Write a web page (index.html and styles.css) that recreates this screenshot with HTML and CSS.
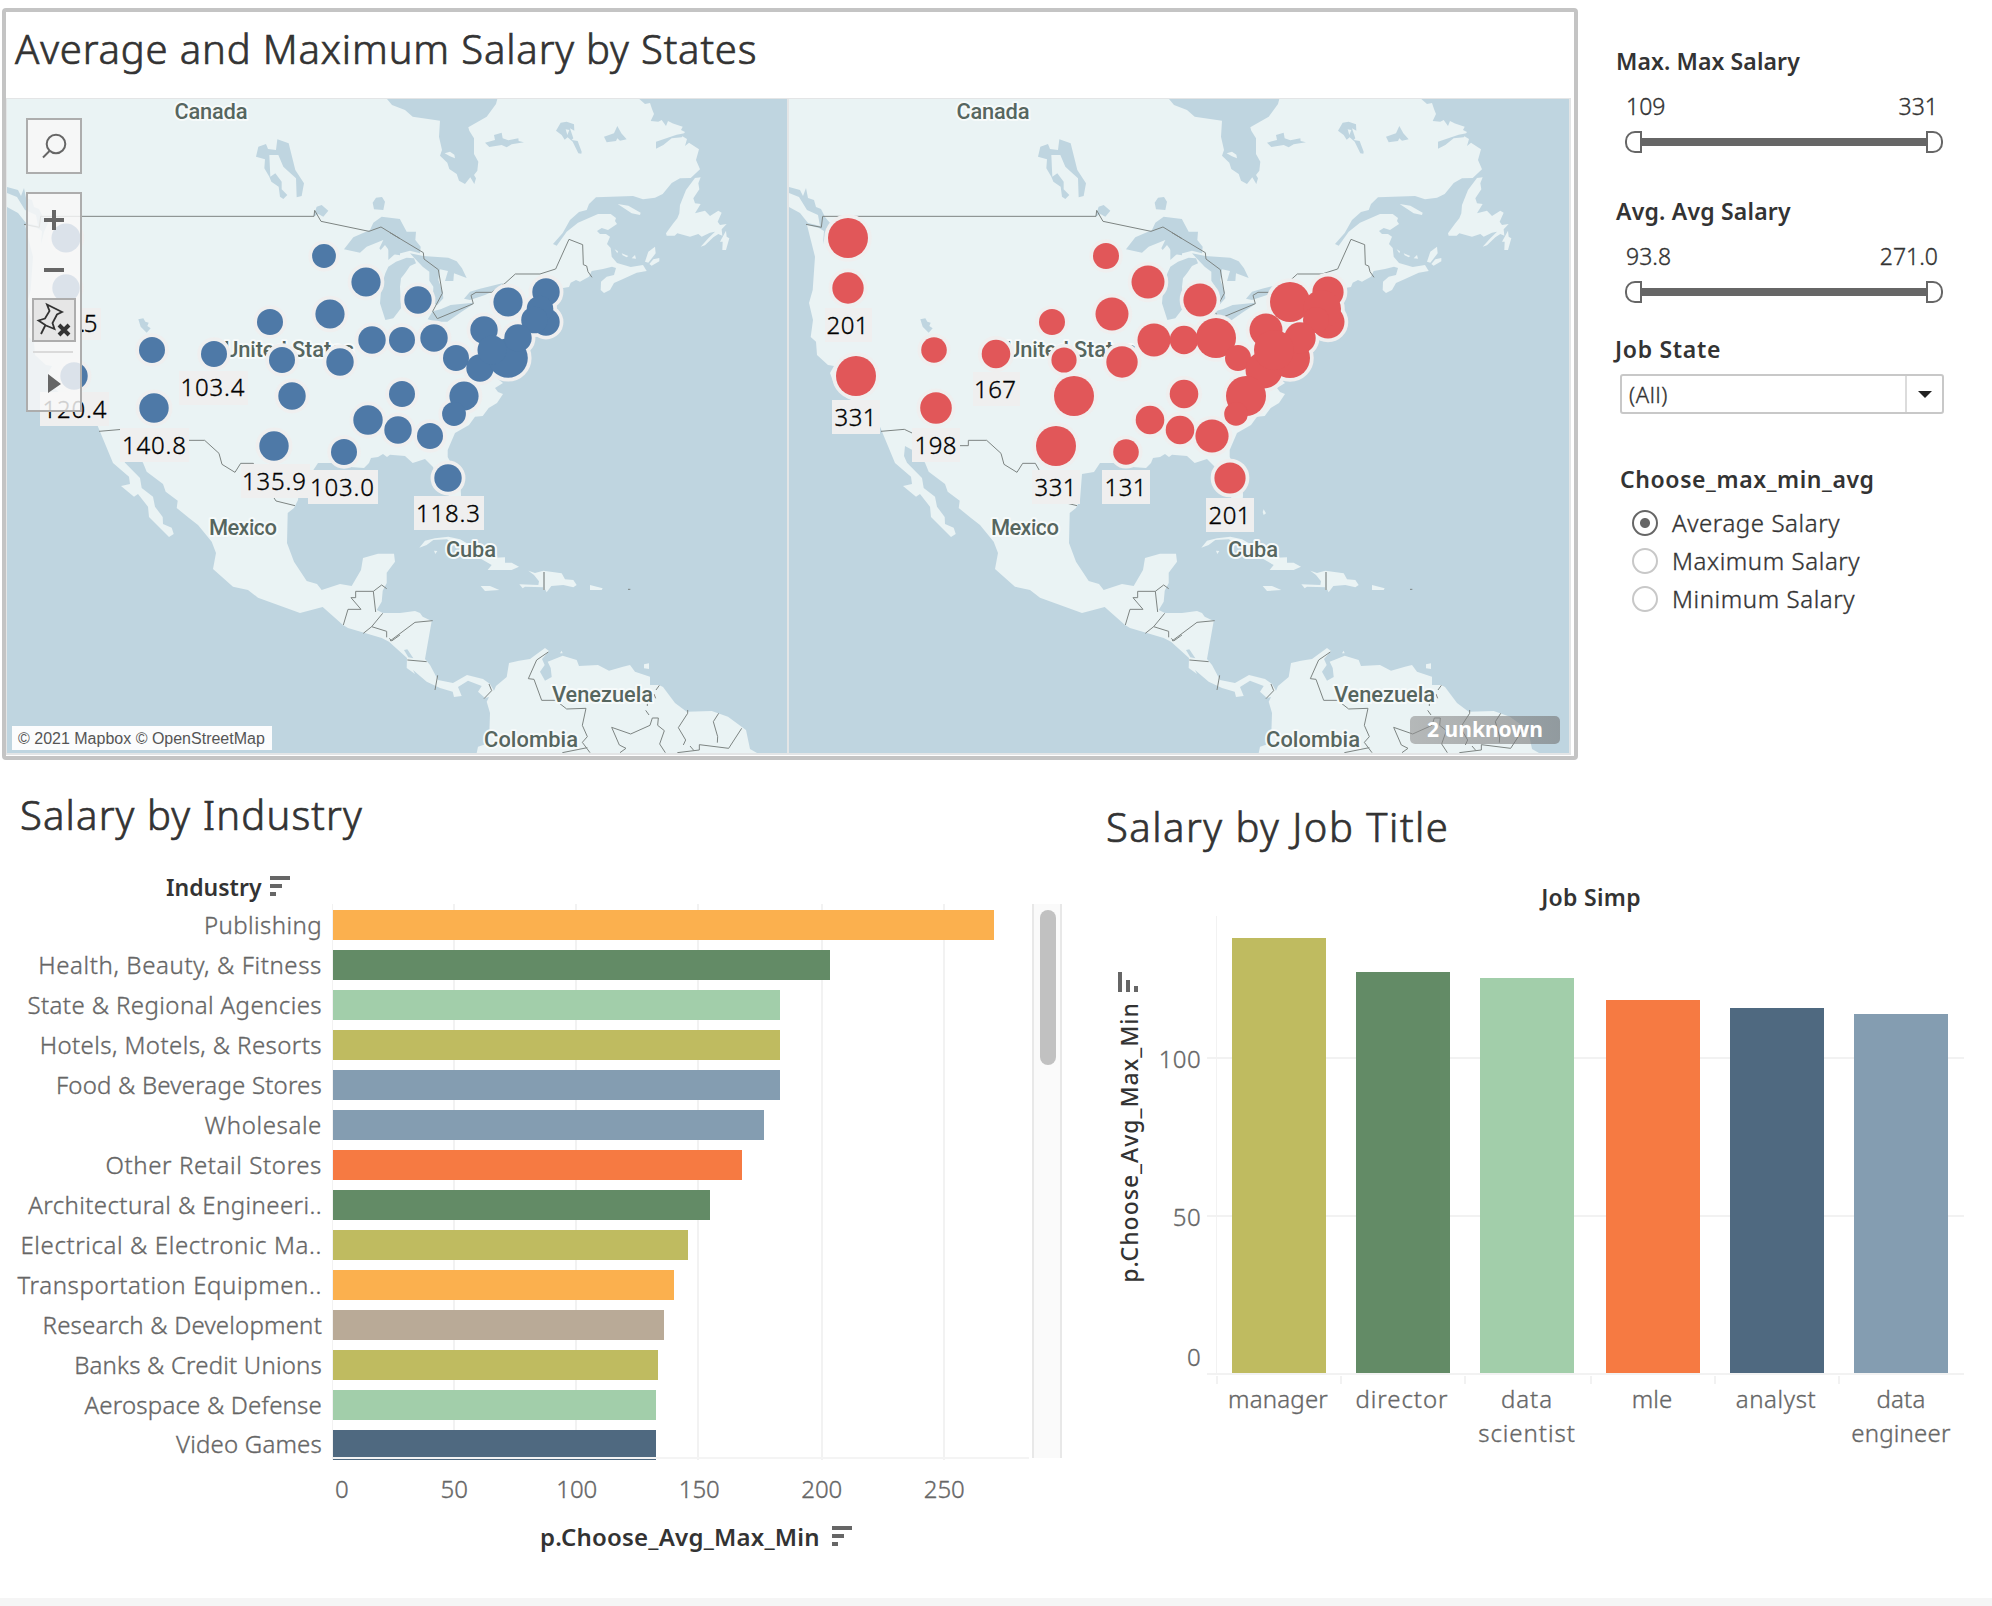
FILE: index.html
```html
<!DOCTYPE html>
<html lang="en">
<head>
<meta charset="utf-8">
<title>Salary dashboard</title>
<link rel="stylesheet" href="styles.css">
</head>
<body>
<svg class="defs" width="0" height="0" aria-hidden="true">
  <defs>
    <g id="basemap">
      <rect class="water" x="0" y="90" width="800" height="670"/>
      <path class="land" d="M7 99H387L392 105 405 110 412.700 116.700 440 120.700 439 136.700 442 150 440 155.700 447.300 162.700 449.300 169 456.700 174 459 180.700 465 184 470.300 177.300 474.300 184 476 178.300 474 175 477.300 170.700 478.300 161.700 474 154V138.300L469.300 130.700 468.300 127.300 486.700 116.700 496 104 497.300 99H639.300L645 104 650 103 652 109 654 114 650.700 121 658.300 121.700 661.700 120 666 126 668 121 673 123.500 682.700 126.700 681 130 685 132 682 136 687 139 685 146 689 142.700 699 149.300 696 160 700 169.300 690.700 178 680 178.300 671.700 183 662.700 194 655 197.700 643 199.300 633 196 596 197.300 589 204 586.700 210 579 212 570 220 562.700 233 553 244 556.700 245.700 566.700 231.700 578 222.700 598 214H610.700L616 218 615 221 617 224 608 230 601.700 228 597 231 600 234H606L610 236.700 607 244 610.700 248 611.700 256.700 617 263 630.700 267 643 265 646.700 271 636.700 272.700 623 279 614 283 610 290 604 293 600.700 290 601 281.700 606.700 276.700 614 275 616 268 612 266.700 603 269 591.700 271 589 276.700 583 280 580 281.700 576 280 570.700 282.700 569 287 563 288 561 295 557 302 552 314 554 325 546 332 533 337 532 346 524 356 519 370 512 379H498L503 383 495 388 498 392 503 394 497 403 488.700 408 482.700 416 475 416.700 469 425 455 433 447.700 450V457L452 465 460 478 461 495 460 512 454 514 447 490 438 480 433 467 425 459 412.700 463 405 456 390 454.700 387 457 383 454 378 457 371 458 369 463 364 468 350 467 333 463 318 463 312 472 300 474 298 500 294 508 287.700 513 287 543 294 561.700 306.700 581 317 584 321.700 590 340 584 351.700 586 361 570 363 558 378 553.700H394L395 561.700 386.700 572.700V583L382.700 590.700 381.700 601.700 376.700 610 383 613H400L415 611 420 613 422.700 616.700 431.700 621 425 659 430 665 438 680 453 683 467 675 483 679 490 684 494 690.700 496 686 506.700 677 509 663 519 660.700 530 659 545 648 549 651 542 659 544.700 665 540 671.700 545 680.700 551.700 677 550.700 668 547.700 661.700 562.700 655.700 576.700 660 579 666 598 665 609 670.700 623 666.700 630 665 635 671.700 650 676.700V685H659L663 687 675 703 686.700 711.700 711.700 711 728 716.700 746 730 750 749 757 753H476.700L478 746.700 489 743 490 713 486.700 701.700 489 697 485 698 478 691.700 481.700 686 468 680.700 458 687 461.700 696 454 697 452.700 691.700 440 688 426.700 681.700 413 670 415 674 406.700 668 407 658 389 641.700 381.700 638 348 628 343 625 322.700 607 300 613 258 597.700 248 590 233 586.700 213 569 216 553 211.700 541.700 198 525 189 518 176.700 508 177.700 500.700 165.700 491.700 163 484 146.700 471.700 143 462.700 134 452 123 446 122 456 125 462.700 140 478 141.700 488 153 496.700 155 506.700 162.700 517 163 524 171.700 527.700 173.700 534 169 537 149 517 148 506.700 138 494 134 496.700 121 486 130 484 129 476.700 113 463 98 426.700 92 410 64.700 398 53 386.700 48 373 52 366 46 365 35 355 34 341.700 28.700 337 31 320 27 303 30.700 290 33 256.700 25 225 37 228 42 231 41 244 44 232 48 223 43 217 39 209 34 207 32 200 26 198 24 188 21 196 18 190 7 187Z"/>
      <g class="land">
        <path d="M7 193 17 197 25 210 36 215 38 226 26 223 18 213 7 207Z"/>
        <g transform="translate(390 90) scale(.33333)">
          <path d="M164 190 180 185 193 194 195 205 180 199ZM683 342 715 347 752 368 750 375 725 370ZM932 262 915 264 888 300 870 345 868 370 862 385 850 400 828 430 830 437 854 437 862 430 900 440 925 432 935 440 960 428 975 425 955 445 932 470 945 466 970 442 985 432 997 437 995 418 1010 402 990 405 983 395 995 368 985 362 960 378 945 362 915 370 932 342 915 340 910 325 928 298 925 280ZM990 455 1008 422 1010 440 1018 445 1008 480 997 480 998 455ZM765 515 775 485 795 470 797 490 775 518ZM778 522 790 508 808 504 808 514 785 527ZM674 478 684 484 682 490ZM695 490 715 498 710 502 698 496ZM725 505 735 495 738 506Z"/>
        </g>
        <g transform="translate(390 450) scale(.33333)">
          <path d="M88 293 105 272 135 265 175 260 210 268 240 285 290 310 312 323 345 322 345 338 365 338 387 350 365 360H293L305 345 270 325 210 285 170 268 130 270 110 285ZM132 302 142 303 136 312ZM415 362 435 369 460 362 515 370 525 388 550 390 560 405 550 412 520 405 484 408 470 427 462 412 405 410 398 415 388 403 445 405 447 394 432 375ZM600 405 638 415 635 420H600ZM272 408 300 408 328 420 285 423ZM762 643 777 640V657L762 655ZM510 610 515 602 518 610ZM275 178 282 190 275 195 272 186Z"/>
        </g>
      </g>
      <g class="water">
        <path transform="scale(.33333)" d="M775 440 798 432 804 447 828 450 832 418 866 430 886 510 912 550 905 588 890 592 888 535 868 517 850 500 835 465 808 465 811 530 826 520 845 545 845 568 862 585 850 597 840 590 836 560 814 545 808 530 793 505 795 478 768 470ZM940 650 950 620 965 615 985 632 970 650 955 642ZM1118 608 1128 593 1146 591 1155 605 1150 630 1122 628ZM1032 748 1060 712 1110 690 1120 668 1145 650 1200 657V766L1175 762 1155 735 1142 750 1138 745 1150 720 1100 740 1080 758ZM415 958 430 955 436 965 446 968 442 978 452 985 440 998 422 980Z"/>
        <g transform="translate(390 90) scale(.33333)">
          <path d="M-5 387 30 388 50 425 78 425 76 450 92 470 90 490 60 482 32 490 15 492-5 510ZM-26 590-14 550-5 530 18 515 50 503 72 505 78 520 60 528 45 550 33 565 30 590 33 655 10 685-14 690-30 640ZM60 490 100 498 175 503 200 514 216 535 230 564 192 550 190 573 165 573 174 543 150 538 145 570 158 605 160 625 142 645 128 640 130 590 118 572V545L98 530ZM113 688 128 664 152 658 182 645 250 638 246 645 215 665 172 695 140 695ZM222 626 240 605 270 596 340 579 318 600 285 615 240 630ZM285 158 315 150 312 135 335 128 338 145 355 151 385 145 386 153 402 157 365 163 350 172 335 165 298 171ZM498 122 512 98 530 95 552 103 553 122 540 115 550 145 545 150 563 153 575 185 574 191 565 190 548 155 533 142 524 149 515 135ZM527 118 532 135 538 120ZM642 140 672 130 682 108 694 130 710 148 690 152 682 145 678 153 650 157ZM798 155 820 148 860 134 884 130 875 142 845 145 820 165 798 176Z"/>
        </g>
        <path transform="translate(390 450) scale(.33333)" d="M42 600 52 598 70 625 55 622Z"/>
      </g>
      <g class="borders">
        <path transform="scale(.33333)" d="M72 673 118 682 122 649H942L944 631 963 664 1107 694 1143 681 1200 716"/>
        <path transform="translate(390 90) scale(.33333)" d="M0 428 100 488 102 507 145 539 157 610 128 664 142 686 250 641 243 616 258 607H305L345 580 376 552 450 552 497 537 537 448 578 464 580 524 590 528 594 545 606 562"/>
        <path transform="translate(-2 90) scale(.33333)" d="M303 1024 373 1018 430 1045 480 1067H565V1051H620L663 1090 672 1123 711 1147 728 1120H766L800 1180 834 1233 891 1247"/>
        <path transform="translate(0 380) scale(.33333)" d="M1030 735 1044 688H1083L1053 653H1067V634H1120L1145 615 1160 626M1120 634 1127 696M1148 700 1115 740 1090 760M1115 740 1160 754V772M1168 775 1175 783 1200 765"/>
        <path transform="translate(390 450) scale(.33333)" d="M0 573 75 517 128 512M52 630 110 635M143 676 135 720M297 702 305 722 282 746M475 606 440 630 415 686 432 688 455 751H497L530 777 588 775 577 826 592 860 577 877 600 908M517 908 592 893M808 706 798 720M792 732 797 745M772 758V768M767 781 777 795M690 908 708 895 688 885 665 832 722 852 780 826 787 804H805L803 826 823 842 809 882 826 908M893 780V790L865 833 887 870 880 885M900 888 912 902M862 908 928 900V884L1016 895 1055 835M986 790 970 815 983 860 982 878M714 418H721"/>
        <path class="heavy" transform="translate(390 450) scale(.33333)" d="M462 366V420"/>
      </g>
      <g class="country">
        <text x="174.500" y="118.500" textLength="73">Canada</text>
        <text x="224" y="356.500" textLength="130">United States</text>
        <text x="209" y="534.500" textLength="68">Mexico</text>
        <text x="446" y="556.500" textLength="50">Cuba</text>
        <text x="552" y="701.500" textLength="101">Venezuela</text>
        <text x="484" y="746.500" textLength="94">Colombia</text>
      </g>
    </g>
    <g id="avg-marks">
      <circle cx="66" cy="238" r="14.500"/><circle cx="66" cy="288" r="13.700"/><circle cx="74" cy="376" r="13.700"/>
      <circle cx="324" cy="256" r="11.900"/><circle cx="366" cy="282" r="14.600"/><circle cx="330" cy="314" r="14.600"/>
      <circle cx="270" cy="322" r="13"/><circle cx="152" cy="350" r="13"/><circle cx="214" cy="354" r="13"/>
      <circle cx="282" cy="360" r="13"/><circle cx="340" cy="362" r="13.700"/><circle cx="372" cy="340" r="13.700"/>
      <circle cx="402" cy="340" r="13"/><circle cx="154" cy="408" r="14.700"/><circle cx="292" cy="396" r="13.700"/>
      <circle cx="274" cy="446" r="14.700"/><circle cx="344" cy="452" r="13"/><circle cx="368" cy="420" r="14.700"/>
      <circle cx="402" cy="394" r="13"/><circle cx="398" cy="430" r="13.700"/><circle cx="418" cy="300" r="13.700"/>
      <circle cx="434" cy="338" r="13.700"/><circle cx="456" cy="358" r="13"/><circle cx="480" cy="368" r="13.700"/>
      <circle cx="508" cy="358" r="19.800"/><circle cx="508" cy="302" r="14.600"/><circle cx="546" cy="292" r="13.700"/>
      <circle cx="546" cy="322" r="13.700"/><circle cx="540" cy="309" r="13.300"/><circle cx="534.500" cy="320" r="13.300"/>
      <circle cx="484" cy="330" r="13.700"/><circle cx="518" cy="338" r="13.700"/><circle cx="492" cy="350" r="14.500"/>
      <circle cx="464" cy="396" r="14.600"/><circle cx="454" cy="414" r="11.900"/><circle cx="430" cy="436" r="13"/>
      <circle cx="448" cy="478" r="13.700"/>
    </g>
    <g id="max-marks">
      <circle cx="66" cy="238" r="20"/><circle cx="66" cy="288" r="15.700"/><circle cx="74" cy="376" r="20"/>
      <circle cx="324" cy="256" r="13"/><circle cx="366" cy="282" r="16.500"/><circle cx="330" cy="314" r="16.500"/>
      <circle cx="270" cy="322" r="13"/><circle cx="152" cy="350" r="12.800"/><circle cx="214" cy="354" r="14.300"/>
      <circle cx="282" cy="360" r="12.600"/><circle cx="340" cy="362" r="15.700"/><circle cx="372" cy="340" r="16.500"/>
      <circle cx="402" cy="340" r="14.200"/><circle cx="154" cy="408" r="15.800"/><circle cx="292" cy="396" r="20"/>
      <circle cx="274" cy="446" r="20"/><circle cx="344" cy="452" r="12.800"/><circle cx="368" cy="420" r="14.300"/>
      <circle cx="402" cy="394" r="14.300"/><circle cx="398" cy="430" r="14.300"/><circle cx="418" cy="300" r="16.600"/>
      <circle cx="434" cy="338" r="20"/><circle cx="456" cy="358" r="13"/><circle cx="482" cy="370" r="18.500"/>
      <circle cx="508" cy="358" r="20"/><circle cx="508" cy="302" r="20"/><circle cx="546" cy="292" r="15.600"/>
      <circle cx="546" cy="322" r="16.500"/><circle cx="540" cy="309" r="19"/><circle cx="534" cy="320" r="13"/>
      <circle cx="484" cy="330" r="16.500"/><circle cx="518" cy="338" r="15.700"/><circle cx="492" cy="350" r="20"/>
      <circle cx="464" cy="396" r="20"/><circle cx="454" cy="414" r="11.800"/><circle cx="430" cy="436" r="16.600"/>
      <circle cx="448" cy="478" r="15.600"/>
    </g>
  </defs>
</svg>

<main class="dashboard">
  <div class="top-row">
    <section class="map-card">
      <h1 class="title map-title">Average and Maximum Salary by States</h1>
      <div class="panes">
        <div class="pane">
          <svg class="map" viewBox="7 99 780 654">
            <use href="#basemap"/>
            <use href="#avg-marks" class="halo"/>
            <g class="label-box">
              <rect x="31" y="308" width="70" height="32"/><rect x="40" y="392" width="69" height="34"/>
              <rect x="179" y="371" width="69" height="34"/><rect x="120" y="428" width="69" height="34"/>
              <rect x="241" y="464" width="69" height="34"/><rect x="308" y="470" width="70" height="34"/>
              <rect x="414" y="496" width="70" height="34"/>
            </g>
            <use href="#avg-marks" class="avg"/>
            <g class="mark-label">
              <text x="88.500" y="332" textLength="18">.5</text>
              <text x="74.500" y="418" textLength="64">120.4</text>
              <text x="212.500" y="396" textLength="64">103.4</text>
              <text x="154" y="454" textLength="64">140.8</text>
              <text x="274" y="490" textLength="64">135.9</text>
              <text x="342" y="496" textLength="64">103.0</text>
              <text x="448" y="522" textLength="64">118.3</text>
            </g>
          </svg>
          <div class="controls">
            <div class="search">
              <svg viewBox="0 0 52 52"><circle cx="28" cy="24" r="9.300"/><path d="M21.500 31 15 37.500"/></svg>
            </div>
            <div class="toolbar">
              <svg viewBox="26 192 56 220">
                <path class="solid" d="M44 218H52V210H56V218H64V222H56V230H52V222H44ZM44 268H64V272H44ZM48 374 61 384 48 393Z"/>
                <rect class="pin-box" x="33" y="299" width="42" height="42"/>
                <path class="pin" d="M47 304.500 62 312 57 314.500 52.500 323 54.500 329 46 325.500 38.500 320.500 45 318.500 49.500 311ZM45.500 325 41 334"/>
                <path class="cross" d="M59 325 69 335M69 325 59 335"/>
                <path class="rule" d="M33 352H73"/>
              </svg>
            </div>
          </div>
          <div class="attribution">© 2021 Mapbox © OpenStreetMap</div>
        </div>
        <div class="pane">
          <svg class="map" viewBox="7 99 780 654">
            <use href="#basemap"/>
            <use href="#max-marks" class="halo"/>
            <g class="label-box">
              <rect x="43" y="308" width="47" height="34"/><rect x="50" y="400" width="48" height="34"/>
              <rect x="130" y="428" width="48" height="34"/><rect x="191" y="372" width="47" height="34"/>
              <rect x="250" y="470" width="48" height="34"/><rect x="320" y="470" width="48" height="34"/>
              <rect x="424" y="498" width="48" height="34"/>
            </g>
            <use href="#max-marks" class="max"/>
            <g class="mark-label">
              <text x="65.500" y="334" textLength="42">201</text>
              <text x="73.500" y="426" textLength="42">331</text>
              <text x="153.500" y="454" textLength="42">198</text>
              <text x="213" y="398" textLength="42">167</text>
              <text x="273.500" y="496" textLength="42">331</text>
              <text x="343.500" y="496" textLength="42">131</text>
              <text x="447.500" y="524" textLength="42">201</text>
            </g>
          </svg>
          <div class="unknown">2 unknown</div>
        </div>
      </div>
    </section>

    <aside class="filters">
      <h2 class="filter-title">Max. Max Salary</h2>
      <div class="range">
        <div class="range-values"><span>109</span><span>331</span></div>
        <div class="slider"><i class="knob left"></i><i class="track"></i><i class="knob right"></i></div>
      </div>
      <h2 class="filter-title t-avg">Avg. Avg Salary</h2>
      <div class="range">
        <div class="range-values"><span>93.8</span><span>271.0</span></div>
        <div class="slider"><i class="knob left"></i><i class="track"></i><i class="knob right"></i></div>
      </div>
      <h2 class="filter-title t-state">Job State</h2>
      <div class="select"><span>(All)</span><b><svg viewBox="0 0 14 7"><path d="M0 0H14L7 7Z"/></svg></b></div>
      <h2 class="filter-title t-choose">Choose_max_min_avg</h2>
      <div class="radios">
        <label><i class="radio on"></i><span>Average Salary</span></label>
        <label><i class="radio"></i><span>Maximum Salary</span></label>
        <label><i class="radio"></i><span>Minimum Salary</span></label>
      </div>
    </aside>
  </div>

  <div class="bottom-row">
    <section class="industry">
      <h1 class="title industry-title">Salary by Industry</h1>
      <div class="industry-head"><span class="head-text">Industry</span>
        <svg class="sort" viewBox="0 0 20 20"><path d="M0 0H20V4H0ZM0 8H12V12H0ZM0 16H6V20H0Z"/></svg></div>
      <div class="industry-body">
        <div class="plot">
          <i class="grid-x first" style="left:332px"></i><i class="grid-x" style="left:453px"></i><i class="grid-x" style="left:575px"></i><i class="grid-x" style="left:697px"></i><i class="grid-x" style="left:821px"></i><i class="grid-x" style="left:943px"></i>
          <div class="row"><span class="wide">Publishing</span><i class="bar amber" style="width:661px"></i></div>
          <div class="row"><span class="wider">Health, Beauty, &amp; Fitness</span><i class="bar green" style="width:497px"></i></div>
          <div class="row"><span class="wide">State &amp; Regional Agencies</span><i class="bar mint" style="width:447px"></i></div>
          <div class="row"><span class="wide">Hotels, Motels, &amp; Resorts</span><i class="bar olive" style="width:447px"></i></div>
          <div class="row"><span class="snug">Food &amp; Beverage Stores</span><i class="bar steel" style="width:447px"></i></div>
          <div class="row"><span class="wider">Wholesale</span><i class="bar steel" style="width:431px"></i></div>
          <div class="row"><span class="wider">Other Retail Stores</span><i class="bar orange" style="width:409px"></i></div>
          <div class="row"><span class="wide">Architectural &amp; Engineeri..</span><i class="bar green" style="width:377px"></i></div>
          <div class="row"><span class="wider">Electrical &amp; Electronic Ma..</span><i class="bar olive" style="width:355px"></i></div>
          <div class="row"><span class="wider">Transportation Equipmen..</span><i class="bar amber" style="width:341px"></i></div>
          <div class="row"><span class="snug">Research &amp; Development</span><i class="bar taupe" style="width:331px"></i></div>
          <div class="row"><span class="snug">Banks &amp; Credit Unions</span><i class="bar olive" style="width:325px"></i></div>
          <div class="row"><span class="snug">Aerospace &amp; Defense</span><i class="bar mint" style="width:323px"></i></div>
          <div class="row"><span class="snug last">Video Games</span><i class="bar navy" style="width:323px"></i></div>
          <i class="axis-line"></i>
        </div>
        <div class="scroll"><i></i></div>
      </div>
      <div class="axis-x"><span>0</span><span>50</span><span>100</span><span>150</span><span>200</span><span>250</span></div>
      <div class="axis-title"><span>p.Choose_Avg_Max_Min</span>
        <svg class="sort" viewBox="0 0 20 20"><path d="M0 0H20V4H0ZM0 8H12V12H0ZM0 16H6V20H0Z"/></svg></div>
    </section>

    <section class="jobs">
      <h1 class="title job-title">Salary by Job Title</h1>
      <div class="job-head">Job Simp</div>
      <div class="job-body">
        <div class="y-title">
          <svg class="sort-v" viewBox="0 0 20 20"><path d="M0 0H4V20H0ZM8 8H12V20H8ZM16 14H20V20H16Z"/></svg>
          <span>p.Choose_Avg_Max_Min</span>
        </div>
        <div class="y-axis"><span class="y100">100</span><span class="y50">50</span><span class="y0">0</span></div>
        <div class="columns">
          <i class="grid-y" style="top:141px"></i><i class="grid-y" style="top:299px"></i><i class="grid-y" style="top:457px"></i>
          <div class="cell"><i class="olive" style="height:435px"></i></div>
          <div class="cell"><i class="green" style="height:401px"></i></div>
          <div class="cell"><i class="mint" style="height:395px"></i></div>
          <div class="cell"><i class="orange" style="height:373px"></i></div>
          <div class="cell"><i class="navy" style="height:365px"></i></div>
          <div class="cell"><i class="steel" style="height:359px"></i></div>
        </div>
      </div>
      <div class="job-labels"><span class="snug">manager</span><span class="widest">director</span><span class="widest">data<br>scientist</span><span>mle</span><span class="wider">analyst</span><span class="snug">data<br>engineer</span></div>
    </section>
  </div>
  <footer class="strip"></footer>
</main>
</body>
</html>
```
FILE: styles.css
```css
* { box-sizing: border-box; }
body { margin: 0; background: #fff; font-family: "Noto Sans", "Open Sans", sans-serif; color: #333; }
i { display: block; font-style: normal; }
.defs { position: absolute; }
.dashboard { width: 1992px; height: 1606px; display: flex; flex-direction: column; overflow: hidden; }
.title { margin: 0; font-size: 40px; font-weight: 300; line-height: 58px; white-space: nowrap; color: #333; -webkit-text-stroke: .7px #333; }

/* map card */
.top-row { display: flex; height: 760px; padding: 8px 0 0 2px; }
.map-card { width: 1576px; height: 752px; border: 4px solid #c4c4c4; border-radius: 4px; flex: none; }
.map-title { height: 86px; line-height: 73px; padding-left: 9px; letter-spacing: .85px; }
.panes { display: flex; gap: 2px; width: 1565px; height: 657px; padding: 1px 2px 2px 1px; background: #e3e5e6; }
.pane { position: relative; width: 780px; height: 654px; flex: none; }
.map { display: block; width: 780px; height: 654px; }
.water { fill: #bfd5e0; }
.land { fill: #eaf3f4; }
.borders { fill: none; stroke: #7c8482; stroke-width: 3; }
.heavy { stroke: #a9b1b1; stroke-width: 6; }
.country { font: 500 22px Roboto, sans-serif; fill: #56665f; stroke: #f6fafa; stroke-width: 4px; stroke-linejoin: round; paint-order: stroke; }
.halo { fill: #efefef; stroke: #efefef; stroke-width: 7.500px; }
.avg { fill: #4e79a7; }
.max { fill: #e15759; }
.label-box { fill: #efefef; }
.mark-label { font-size: 24px; fill: #000; stroke: #000; stroke-width: .35px; text-anchor: middle; font-weight: 300; }
.controls { position: absolute; left: 19px; top: 19px; display: flex; flex-direction: column; gap: 18px; }
.search, .toolbar { width: 56px; background: rgba(248, 248, 248, .83); border: 2px solid #adadad; }
.search { height: 56px; }
.toolbar { height: 220px; }
.search svg { display: block; width: 52px; height: 52px; fill: none; stroke: #666; stroke-width: 2; }
.toolbar svg { display: block; width: 56px; height: 220px; margin: -2px; }
.solid { fill: #666; }
.pin-box { fill: #e6e6e6; stroke: #adadad; stroke-width: 2; }
.pin { fill: none; stroke: #333; stroke-width: 1.800; }
.cross { stroke: #333; stroke-width: 4; }
.rule { stroke: #dadada; stroke-width: 2; }
.attribution { position: absolute; left: 5px; top: 627px; width: 260px; height: 24px; padding-left: 6px; background: rgba(255, 255, 255, .93); font: 16px/25px "Liberation Sans", sans-serif; color: #555; white-space: nowrap; }
.unknown { position: absolute; left: 621px; top: 617px; width: 150px; height: 28px; border-radius: 5px; background: linear-gradient(to right, rgba(145, 145, 145, .6), rgba(115, 115, 115, .6)); color: #fff; font-size: 21px; font-weight: 700; line-height: 26px; text-align: center; }

/* filters */
.filters { width: 328px; margin-left: 38px; padding-top: 38px; }
.filter-title { margin: 0; height: 30px; font-size: 23px; font-weight: 600; line-height: 30px; white-space: nowrap; color: #333; letter-spacing: .1px; }
.range { padding: 18px 1px 0 9px; }
.range-values { display: flex; justify-content: space-between; padding: 0 5px 0 1px; font-size: 23px; line-height: 24px; font-weight: 300; -webkit-text-stroke: .35px #333; }
.slider { display: flex; align-items: center; margin-top: 13px; height: 22px; }
.knob { width: 17px; height: 22px; border: 2px solid #666; background: #fff; }
.knob.left { border-radius: 10px 0 0 10px; }
.knob.right { border-radius: 0 10px 10px 0; }
.track { flex: 1; height: 8px; background: #666; }
.t-avg { margin-top: 43px; letter-spacing: .2px; }
.t-state { margin-top: 31px; margin-left: -1px; letter-spacing: .7px; }
.t-choose { margin-top: 50px; margin-left: 4px; letter-spacing: .6px; }
.select { display: flex; width: 324px; height: 40px; margin: 10px 0 0 4px; border: 2px solid #c8c8c8; border-radius: 3px; }
.select span { flex: 1; padding-left: 7px; font-size: 22px; line-height: 36px; font-weight: 300; -webkit-text-stroke: .35px #333; letter-spacing: .6px; }
.select b { width: 37px; border-left: 2px solid #dcdcdc; display: flex; align-items: center; justify-content: center; }
.select svg { width: 14px; height: 7px; fill: #222; }
.radios { padding: 10px 0 0 16px; }
.radios label { display: flex; align-items: center; gap: 14px; height: 38px; font-size: 24px; font-weight: 300; -webkit-text-stroke: .35px #333; letter-spacing: .58px; }
.radios span { padding-bottom: 2px; }
.radio { width: 26px; height: 26px; border: 2px solid #c8c8c8; border-radius: 50%; }
.radio.on { border-color: #666; background: radial-gradient(circle, #666 4.500px, transparent 5.500px); }

/* bottom charts */
.bottom-row { display: flex; height: 838px; }
.industry { width: 1064px; padding-top: 26px; }
.industry-title { height: 60px; padding-left: 20px; letter-spacing: 1.150px; }
.industry-head { display: flex; height: 58px; padding: 24px 0 0 166px; gap: 10px; font-size: 23px; font-weight: 600; line-height: 34px; }
.head-text { width: 94px; }
.sort { width: 20px; height: 20px; margin-top: 6px; fill: #666; flex: none; }
.industry-body { display: flex; height: 556px; }
.plot { position: relative; width: 1032px; height: 556px; padding-top: 1px; overflow: hidden; }
.grid-x { position: absolute; top: 0; width: 2px; height: 556px; background: #f2f2f2; }
.grid-x.first { width: 1px; }
.row { position: relative; display: flex; align-items: center; height: 40px; gap: 11px; }
.row span { width: 322px; text-align: right; line-height: 40px; white-space: nowrap; }
.row span, .axis-x, .y-axis, .job-labels { font-size: 24px; font-weight: 300; color: #666; -webkit-text-stroke: .35px #666; }
.snug { letter-spacing: .2px; }
.wide { letter-spacing: .42px; }
.wider { letter-spacing: .62px; }
.widest { letter-spacing: .95px; }
.row .last { padding-bottom: 2px; }
.bar { height: 30px; }
.axis-line { position: absolute; left: 333px; top: 553px; width: 696px; height: 2px; background: #f4f4f4; }
.scroll { width: 30px; height: 554px; border: solid #e8e8e8; border-width: 0 2px; background: #fafafa; padding: 6px; }
.scroll i { width: 16px; height: 155px; border-radius: 8px; background: #c1c1c1; }
.axis-x { display: grid; grid-template-columns: repeat(5, 122.500px); width: 1032px; padding: 10px 0 0 393px; height: 56px; line-height: 38px; }
.axis-x span { text-align: center; }
.axis-x span:first-child { position: absolute; left: 335px; }
.axis-title { display: flex; gap: 14px; padding-left: 540px; height: 40px; margin-top: 2px; font-size: 24px; font-weight: 600; line-height: 38px; letter-spacing: .22px; }
.axis-title span { width: 278px; }
.axis-title .sort { margin-top: 8px; }
.amber { background: #fbb04e; }
.green { background: #638b66; }
.mint { background: #a2ceaa; }
.olive { background: #bfbb60; }
.steel { background: #849db1; }
.orange { background: #f67a42; }
.taupe { background: #b9aa97; }
.navy { background: #4f6980; }

.jobs { width: 928px; padding: 38px 0 0 42px; }
.job-title { height: 60px; letter-spacing: 1.500px; }
.job-head { height: 58px; padding: 24px 0 0 112px; width: 858px; text-align: center; font-size: 23px; font-weight: 600; line-height: 30px; letter-spacing: .3px; }
.job-body { display: flex; height: 459px; }
.y-title { display: flex; flex-direction: column; align-items: center; width: 34px; margin-left: 5px; padding-top: 56px; gap: 10px; }
.sort-v { width: 20px; height: 20px; fill: #666; flex: none; }
.y-title span { writing-mode: vertical-rl; transform: rotate(180deg); margin-left: 2px; font-size: 23px; font-weight: 500; line-height: 34px; letter-spacing: 1px; white-space: nowrap; }
.y-axis { width: 56px; display: flex; flex-direction: column; text-align: right; line-height: 30px; letter-spacing: .4px; }
.y100 { margin-top: 128px; }
.y50 { margin-top: 128px; }
.y0 { margin-top: 110px; }
.columns { position: relative; display: grid; grid-template-columns: 124px 124px 126px 124px 124px 126px; width: 748px; height: 457px; margin-left: 15px; border-left: 1px solid #f2f2f2; }
.grid-y { position: absolute; left: -10px; width: 757px; height: 2px; background: #f2f2f2; }
.cell { position: relative; display: flex; align-items: flex-end; padding-left: 15px; }
.cell i { width: 94px; }
.job-labels { display: grid; grid-template-columns: 124px 124px 126px 124px 124px 126px; width: 748px; margin-left: 110px; margin-top: 1px; line-height: 34px; text-align: center; }
.job-labels span { padding-top: 6px; background: linear-gradient(#f2f2f2, #f2f2f2) left top / 2px 8px no-repeat; }
.strip { height: 8px; background: #f5f5f5; }
```
